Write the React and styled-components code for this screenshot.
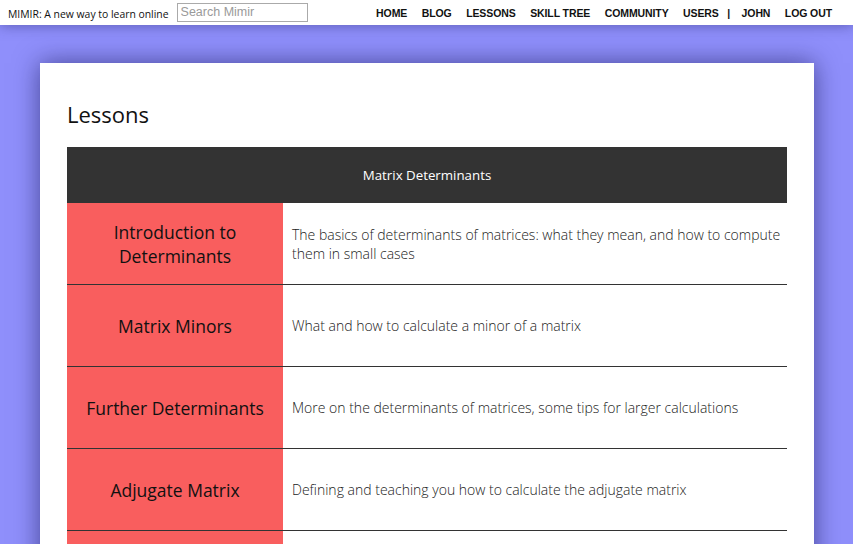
import React from "react";
import styled, { createGlobalStyle } from "styled-components";

const GlobalStyle = createGlobalStyle`
  html, body {
    margin: 0;
    padding: 0;
    background: #8f8ffb;
    font-family: "Open Sans", "Liberation Sans", sans-serif;
    overflow: hidden;
  }
`;

//Top bar
const TopBar = styled.header`
  height: 25px;
  background: #fff;
  display: flex;
  align-items: center;
  padding: 0 21px 0 8px;
  box-shadow: 0 0 14px rgba(40, 40, 110, 0.55);
  position: relative;
  z-index: 2;
`;

const Brand = styled.span`
  font-family: "Open Sans", sans-serif;
  font-size: 10.4px;
  color: #111;
  margin-right: 9px;
  margin-top: 2px;
  white-space: nowrap;
`;

const Search = styled.input`
  width: 131px;
  height: 19px;
  box-sizing: border-box;
  border: 1px solid #aaa;
  padding: 0 3px;
  font-family: "Liberation Sans", Arial, sans-serif;
  font-size: 12.5px;
  color: #333;
  margin-top: -1px;
  margin-left: -1px;
  &::placeholder {
    color: #9a9a9a;
  }
`;

const Nav = styled.nav`
  margin-left: auto;
  display: flex;
  align-items: center;
  gap: 14.5px;
  font-family: "Liberation Sans", Arial, sans-serif;
  font-weight: bold;
  font-size: 10.5px;
  letter-spacing: -0.1px;
  color: #111;
  margin-top: 1px;
`;

const NavLink = styled.a`
  color: #111;
  text-decoration: none;
  cursor: pointer;
`;

const Sep = styled.span`
  margin: 0 -3px 0 -6px;
`;

//Page content
const Page = styled.main`
  padding: 38px 39px 0 40px;
`;

const Card = styled.section`
  background: #fff;
  padding: 27px 27px 40px;
  box-shadow: 0 0 24px rgba(20, 20, 80, 0.6);
  min-height: 600px;
`;

const Title = styled.h1`
  font-family: "Open Sans", sans-serif;
  font-weight: 400;
  font-size: 22px;
  color: #111;
  margin: 9px 0 18px;
  line-height: 30px;
`;

const Table = styled.div`
  display: grid;
  grid-template-columns: 216px 1fr;
`;

const TableHead = styled.div`
  grid-column: 1 / -1;
  height: 56px;
  background: #333;
  color: #fff;
  display: flex;
  align-items: center;
  justify-content: center;
  font-size: 13.3px;
`;

const LessonName = styled.div`
  background: #f95e5e;
  height: 81px;
  border-bottom: 1px solid #333;
  display: flex;
  align-items: center;
  justify-content: center;
  text-align: center;
  font-size: 17.5px;
  line-height: 24px;
  color: #111;
  padding: 0 10px;
`;

const LessonDesc = styled.div`
  height: 81px;
  border-bottom: 1px solid #333;
  display: flex;
  align-items: center;
  padding: 0 6px 0 9px;
  font-size: 14px;
  font-weight: 300;
  line-height: 19px;
  color: #222;
`;

const lessons = [
  {
    name: "Introduction to Determinants",
    desc: "The basics of determinants of matrices: what they mean, and how to compute them in small cases",
  },
  { name: "Matrix Minors", desc: "What and how to calculate a minor of a matrix" },
  {
    name: "Further Determinants",
    desc: "More on the determinants of matrices, some tips for larger calculations",
  },
  {
    name: "Adjugate Matrix",
    desc: "Defining and teaching you how to calculate the adjugate matrix",
  },
  { name: "Inverse Matrices", desc: "Using determinants to find the inverse of a matrix" },
];

const links = ["HOME", "BLOG", "LESSONS", "SKILL TREE", "COMMUNITY", "USERS"];

export default function App() {
  return (
    <>
      <GlobalStyle />
      <TopBar>
        <Brand>MIMIR: A new way to learn online</Brand>
        <Search placeholder="Search Mimir" />
        <Nav>
          {links.map((l) => (
            <NavLink key={l}>{l}</NavLink>
          ))}
          <Sep>|</Sep>
          <NavLink>JOHN</NavLink>
          <NavLink>LOG OUT</NavLink>
        </Nav>
      </TopBar>
      <Page>
        <Card>
          <Title>Lessons</Title>
          <Table>
            <TableHead>Matrix Determinants</TableHead>
            {lessons.map((l) => (
              <React.Fragment key={l.name}>
                <LessonName>{l.name}</LessonName>
                <LessonDesc>{l.desc}</LessonDesc>
              </React.Fragment>
            ))}
          </Table>
        </Card>
      </Page>
    </>
  );
}
